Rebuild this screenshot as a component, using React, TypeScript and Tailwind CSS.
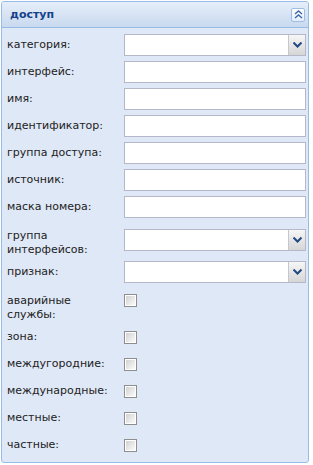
import React from "react";

type Row = {
  label: string;
  kind: "text" | "combo" | "check";
  twoLine?: boolean;
};

const rows: Row[] = [
  { label: "категория:", kind: "combo" },
  { label: "интерфейс:", kind: "text" },
  { label: "имя:", kind: "text" },
  { label: "идентификатор:", kind: "text" },
  { label: "группа доступа:", kind: "text" },
  { label: "источник:", kind: "text" },
  { label: "маска номера:", kind: "text" },
  { label: "группа интерфейсов:", kind: "combo", twoLine: true },
  { label: "признак:", kind: "combo" },
  { label: "аварийные службы:", kind: "check", twoLine: true },
  { label: "зона:", kind: "check" },
  { label: "междугородние:", kind: "check" },
  { label: "международные:", kind: "check" },
  { label: "местные:", kind: "check" },
  { label: "частные:", kind: "check" },
];

function ChevronDown() {
  return (
    <svg width="9" height="6" viewBox="0 0 9 6">
      <path d="M0.5 0.5 L4.5 4.5 L8.5 0.5" fill="none" stroke="#224a84" strokeWidth="2" />
    </svg>
  );
}

function CollapseIcon() {
  return (
    <svg width="9" height="9" viewBox="0 0 9 9">
      <path d="M1 4 L4.5 1 L8 4 M1 8 L4.5 5 L8 8" fill="none" stroke="#3d6aa8" strokeWidth="1.4" />
    </svg>
  );
}

function Field({ kind }: { kind: Row["kind"] }) {
  if (kind === "check") {
    return (
      <div className="w-[13px] h-[13px] border border-[#8e8e8e] bg-white p-[1px]">
        <div className="w-full h-full bg-gradient-to-br from-[#d2d2d2] to-[#fbfbfb]" />
      </div>
    );
  }
  return (
    <div className="w-[182px] h-[22px] border border-[#b5b8c8] bg-white flex">
      <div className="flex-1" />
      {kind === "combo" && (
        <div className="w-[17px] h-full border-l border-[#c4c6d0] bg-gradient-to-b from-[#f6f6f6] to-[#d6d6d6] flex items-center justify-center">
          <ChevronDown />
        </div>
      )}
    </div>
  );
}

export default function App() {
  return (
    <div className="w-[313px] h-[465px] bg-white pt-[1px] pl-[1px]" style={{ fontFamily: '"DejaVu Sans", Tahoma, sans-serif' }}>
      <div className="w-[308px] h-[462px] border border-[#99bbe8] rounded-[3px] bg-[#dfe8f6] flex flex-col overflow-hidden">
        <div className="h-[26px] shrink-0 border-b border-[#99bbe8] bg-gradient-to-b from-[#e6eef9] to-[#c9d9ef] flex items-center justify-between pl-[8px] pr-[3px]">
          <span className="text-[11px] font-bold text-[#15428b] leading-none">доступ</span>
          <div className="w-[14px] h-[14px] rounded-[2px] border border-[#9fbde6] bg-gradient-to-b from-[#ffffff] to-[#e3edf9] flex items-center justify-center">
            <CollapseIcon />
          </div>
        </div>
        <div className="flex flex-col gap-[5px] pt-[6px] pl-[5px]">
          {rows.map((r) => (
            <div key={r.label} className={`flex ${r.twoLine ? "h-[33px] items-start" : "h-[22px] items-center"}`}>
              <div
                className={`w-[117px] shrink-0 text-[11px] text-[#222] leading-[14px] ${r.twoLine ? "pt-[6px] pr-[20px]" : ""}`}
              >
                {r.label}
              </div>
              <div className={r.twoLine ? "mt-[6px]" : ""}>
                <Field kind={r.kind} />
              </div>
            </div>
          ))}
        </div>
      </div>
    </div>
  );
}
